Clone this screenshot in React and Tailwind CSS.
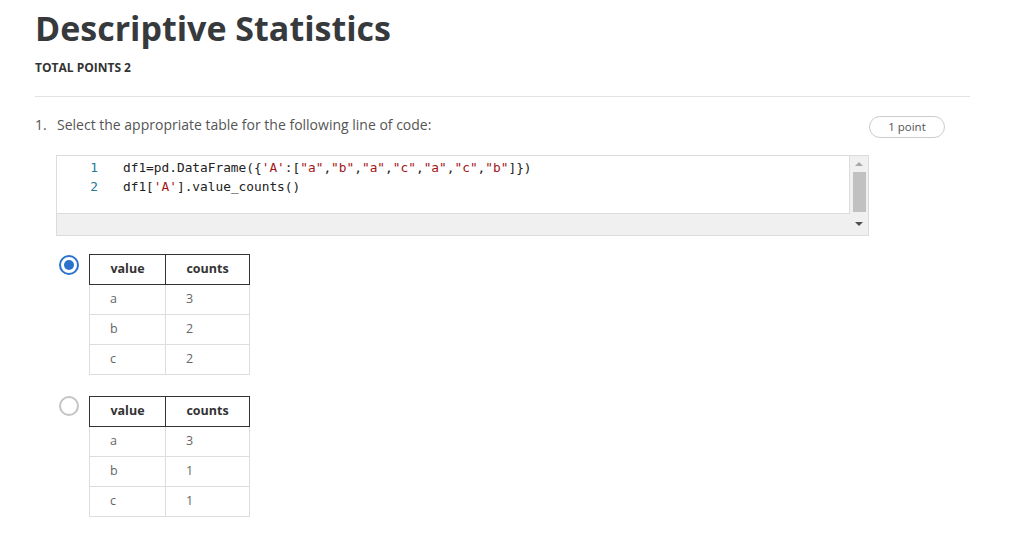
import React from "react";

const Str = ({ children }) => <span className="text-[#a31515]">{children}</span>;

function Radio({ checked }) {
  return checked ? (
    <div className="w-[20px] h-[20px] rounded-full border-2 border-[#2a73cc] flex items-center justify-center">
      <div className="w-[10px] h-[10px] rounded-full bg-[#2a73cc]" />
    </div>
  ) : (
    <div className="w-[20px] h-[20px] rounded-full border-2 border-[#c4c4c4]" />
  );
}

function Table({ rows }) {
  return (
    <div className="w-[161px] text-[12.5px]">
      <div className="flex h-[31px] border border-[#333]">
        <div className="w-[76px] border-r border-[#333] flex items-center justify-center font-bold text-[#333]">value</div>
        <div className="flex-1 flex items-center justify-center font-bold text-[#333]">counts</div>
      </div>
      {rows.map(([v, c]) => (
        <div key={v} className="flex h-[30px] border-x border-b border-[#dddddd] text-[#666]">
          <div className="w-[76px] border-r border-[#dddddd] flex items-center pl-[20px]">{v}</div>
          <div className="flex-1 flex items-center pl-[20px]">{c}</div>
        </div>
      ))}
    </div>
  );
}

export default function App() {
  return (
    <div className="min-h-screen bg-white font-['Open_Sans',sans-serif]">
      <div className="pl-[35px] pr-[48px] pt-[4px]">
        <h1 className="text-[34px] font-bold leading-[48px] text-[#373a3c]">Descriptive Statistics</h1>
        <div className="mt-[8px] text-[12px] leading-[16px] font-bold text-[#333]">TOTAL POINTS 2</div>
        <div className="mt-[20px] border-t border-[#e2e2e2]" />
        <div className="mt-[18px] h-[20px] flex items-start">
          <div className="w-[22px] text-[14px] leading-[20px] text-[#555]">1.</div>
          <div className="flex-1 text-[14px] leading-[20px] text-[#555]">Select the appropriate table for the following line of code:</div>
          <div className="mt-[1px] mr-[25px] h-[22px] w-[76px] shrink-0 rounded-full border border-[#cccccc] flex items-center justify-center text-[11.5px] text-[#555]">1 point</div>
        </div>

        <div className="mt-[20px] ml-[21px] w-[813px] h-[81px] border border-[#dcdcdc] bg-[#f0f0f0] flex">
          <div className="flex-1 flex flex-col">
            <div className="h-[58px] bg-white border-r border-b border-[#dcdcdc] flex pt-[2px] font-['DejaVu_Sans_Mono',monospace] text-[12.8px] leading-[19px]">
              <div className="w-[41px] text-right text-[#237893]">
                <div>1</div>
                <div>2</div>
              </div>
              <div className="pl-[25px] text-[#222] whitespace-pre">
                <div>
                  df1=pd.DataFrame({"{"}<Str>'A'</Str>:[<Str>"a"</Str>,<Str>"b"</Str>,<Str>"a"</Str>,<Str>"c"</Str>,<Str>"a"</Str>,<Str>"c"</Str>,<Str>"b"</Str>]{"})"}
                </div>
                <div>
                  df1[<Str>'A'</Str>].value_counts()
                </div>
              </div>
            </div>
          </div>
          <div className="w-[18px] flex flex-col items-center">
            <div className="h-[16px] flex items-center justify-center">
              <div className="w-0 h-0 border-x-[4px] border-x-transparent border-b-[4px] border-b-[#a8a8a8]" />
            </div>
            <div className="w-[13px] h-[40px] bg-[#c1c1c1]" />
            <div className="flex-1 flex items-center justify-center">
              <div className="w-0 h-0 border-x-[4px] border-x-transparent border-t-[4px] border-t-[#505050]" />
            </div>
          </div>
        </div>

        <div className="mt-[18px] ml-[24px] flex items-start">
          <div className="mt-[1px]">
            <Radio checked />
          </div>
          <div className="ml-[10px]">
            <Table rows={[["a", "3"], ["b", "2"], ["c", "2"]]} />
          </div>
        </div>

        <div className="mt-[21px] ml-[24px] flex items-start">
          <div>
            <Radio />
          </div>
          <div className="ml-[10px]">
            <Table rows={[["a", "3"], ["b", "1"], ["c", "1"]]} />
          </div>
        </div>
      </div>
    </div>
  );
}
